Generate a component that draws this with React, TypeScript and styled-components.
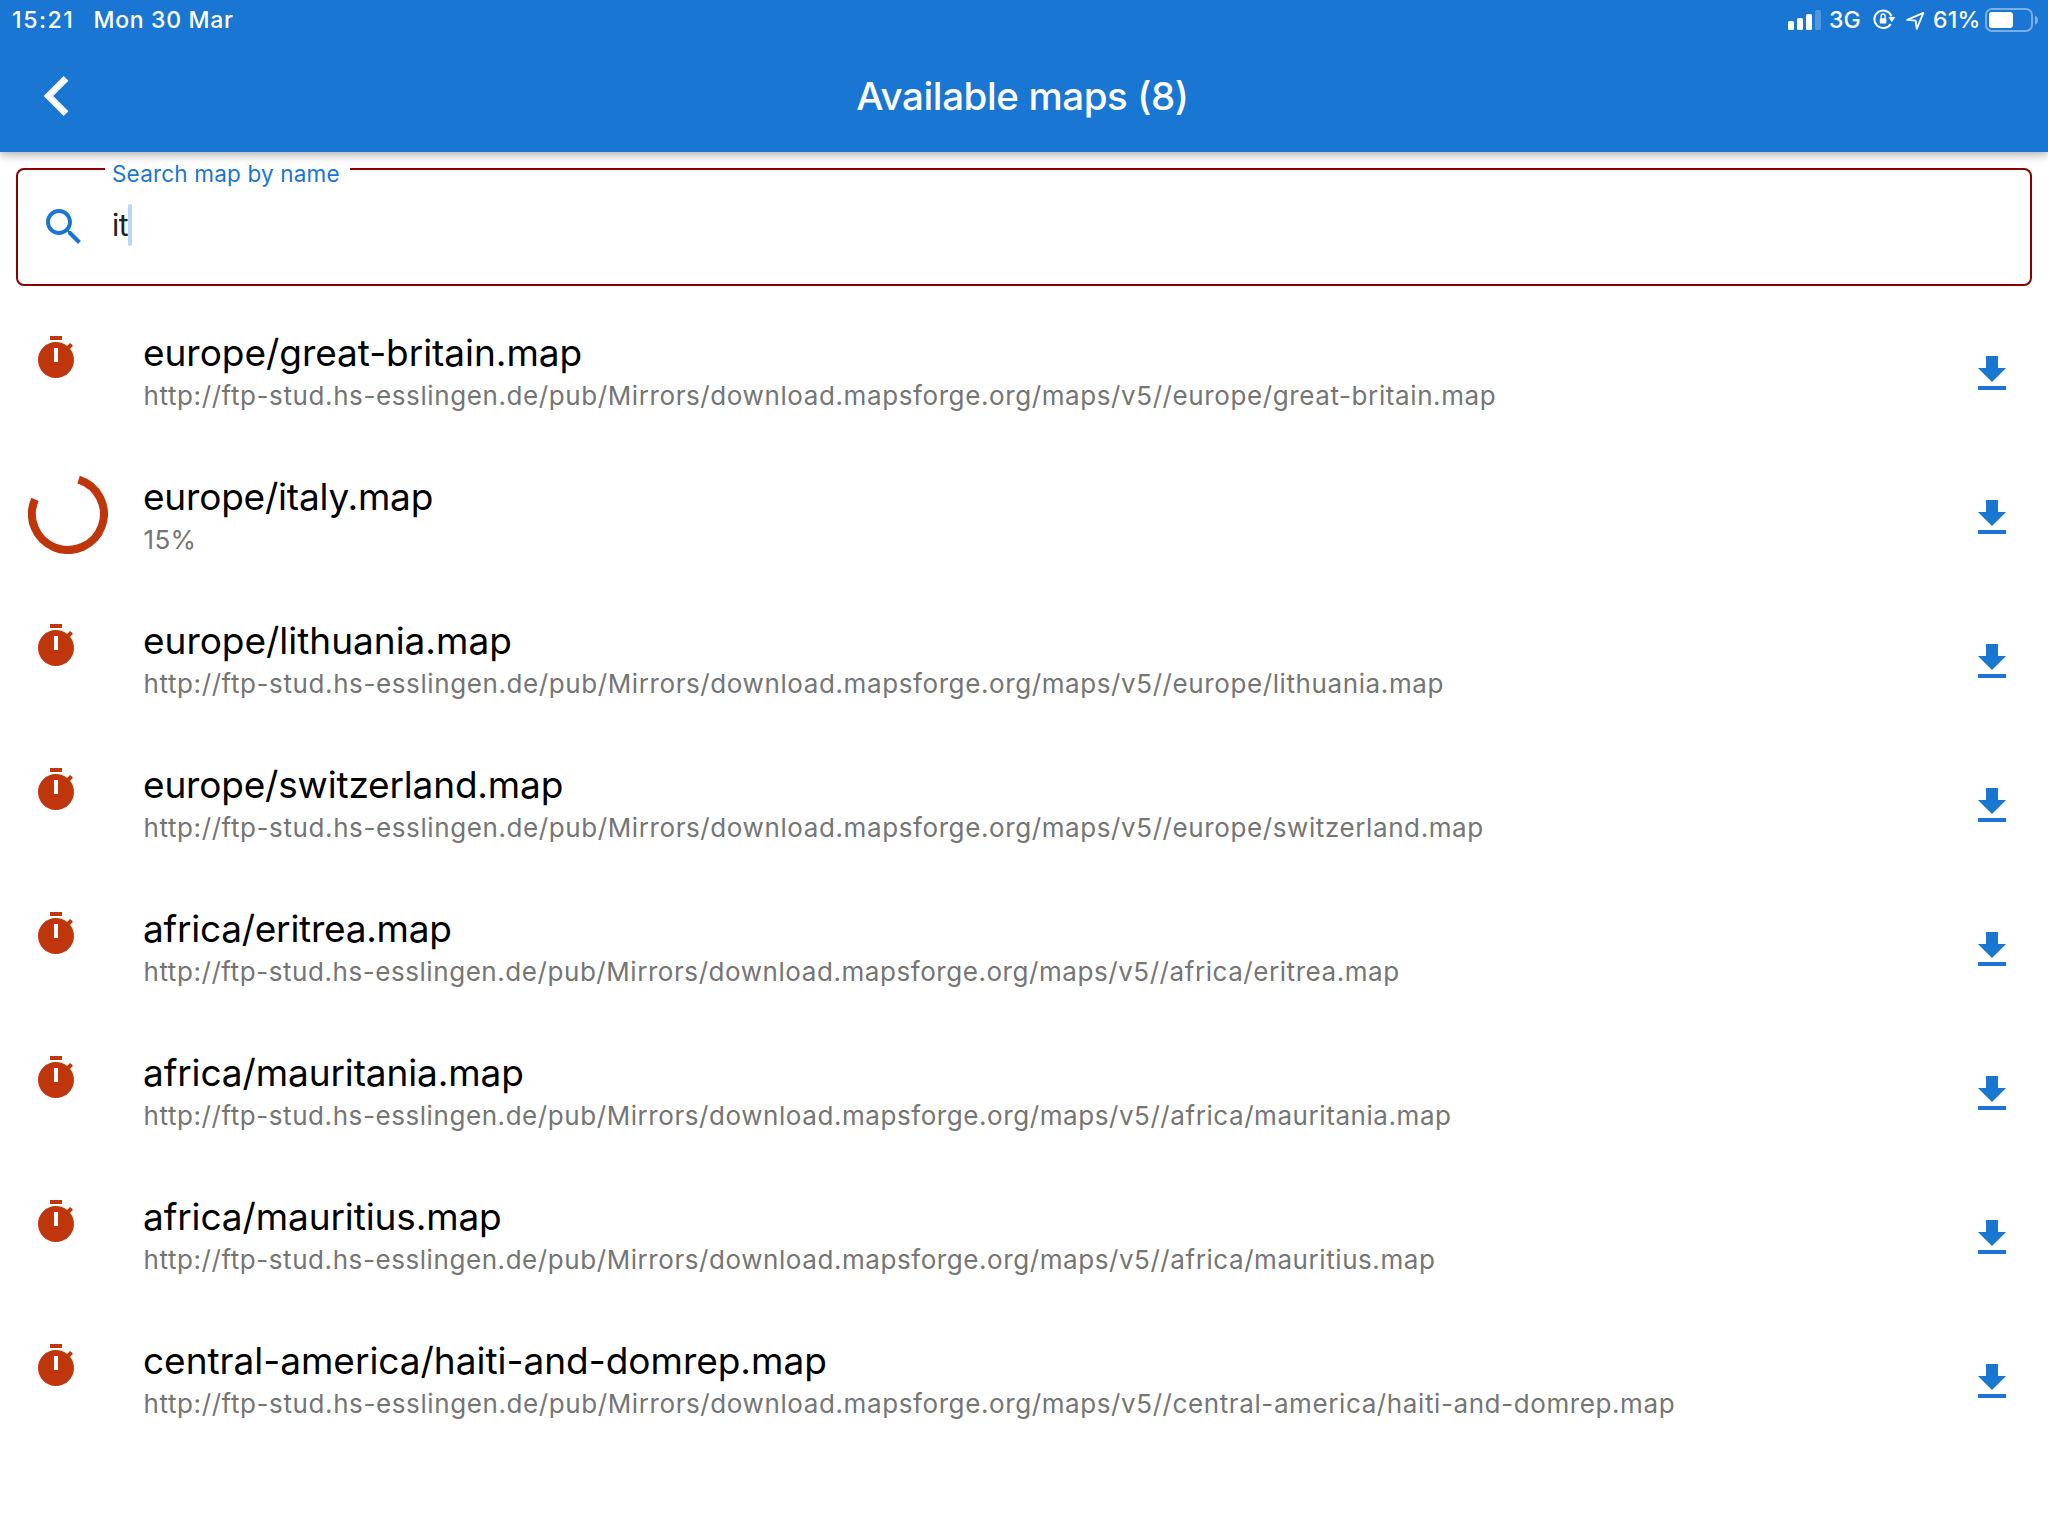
import React from 'react';
import styled, { createGlobalStyle } from 'styled-components';

const BLUE = '#1976d2';
const RUST = '#bf360c';
const MIRROR = 'http://ftp-stud.hs-esslingen.de/pub/Mirrors/download.mapsforge.org/maps/v5//';

const GlobalStyle = createGlobalStyle`
  *, *::before, *::after { box-sizing: border-box; }
  body {
    margin: 0;
    background: #fff;
    font-family: Inter, "Liberation Sans", sans-serif;
  }
  svg { display: block; flex: none; }
`;

const Screen = styled.div`
  display: flex;
  flex-direction: column;
  width: 100%;
  height: 1536px;
  overflow: hidden;
`;

const AppBar = styled.header`
  position: relative;
  z-index: 1;
  flex: none;
  height: 152px;
  background: ${BLUE};
  color: #fff;
  box-shadow: 0 2px 8px rgba(0, 0, 0, 0.2), 0 4px 10px rgba(0, 0, 0, 0.14);
`;

const StatusBar = styled.div`
  display: flex;
  align-items: center;
  height: 40px;
  padding: 0 10px 0 12px;
`;

const StatusText = styled.span<{ $spacing?: number }>`
  font-size: 23px;
  line-height: 28px;
  font-weight: 450;
  letter-spacing: ${(p) => p.$spacing ?? 0}px;
  white-space: pre;
`;

const StatusDate = styled(StatusText)`
  margin-left: 19px;
`;

const StatusIcons = styled.div`
  display: flex;
  align-items: center;
  margin-left: auto;
`;

const Network = styled(StatusText)`
  width: 34px;
  margin: 0 10px 0 8px;
`;

const Percent = styled(StatusText)`
  width: 52px;
  margin-left: -1px;
`;

const Toolbar = styled.div`
  display: grid;
  grid-template-columns: 120px 1fr 120px;
  align-items: center;
  height: 112px;
`;

const BackButton = styled.button`
  display: flex;
  width: 80px;
  height: 80px;
  margin-left: 17px;
  padding: 0;
  border: 0;
  background: none;
  color: inherit;
`;

const Title = styled.h1`
  margin: 0;
  padding-right: 3px;
  text-align: center;
  font-size: 38.5px;
  line-height: 48px;
  font-weight: 500;
  letter-spacing: -0.4px;
`;

const SearchField = styled.div`
  position: relative;
  flex: none;
  display: flex;
  align-items: center;
  height: 118px;
  margin: 16px;
  padding-left: 22px;
  border: 2px solid #8b0000;
  border-radius: 8px;
`;

const SearchLabel = styled.label`
  position: absolute;
  left: 87px;
  top: -10px;
  width: 245px;
  padding-left: 7px;
  font-size: 22.5px;
  line-height: 28px;
  letter-spacing: 0.18px;
  color: ${BLUE};
  white-space: nowrap;
  background: linear-gradient(#fff, #fff) 0 8px / 100% 2px no-repeat;
`;

const Query = styled.span`
  margin: 0 0 4px 24px;
  font-size: 30px;
  line-height: 42px;
  letter-spacing: -0.4px;
  color: #212121;
`;

const Caret = styled.span`
  width: 4px;
  height: 42px;
  margin-bottom: 4px;
  border-radius: 2px;
  background: #bad6f2;
`;

const List = styled.ul`
  flex: 1;
  margin: 0;
  padding: 0;
  list-style: none;
`;

const Row = styled.li`
  display: grid;
  grid-template-columns: 143px 1fr 80px;
  height: 144px;
`;

const Leading = styled.div<{ $busy: boolean }>`
  padding: ${(p) => (p.$busy ? '28px 0 0 28px' : '32px 0 0 32px')};
`;

const Texts = styled.div`
  padding-top: 29px;
  white-space: nowrap;
`;

const Name = styled.div<{ $tight: number }>`
  font-size: 37px;
  line-height: 44px;
  letter-spacing: ${(p) => p.$tight}px;
  color: #000;
`;

const Detail = styled.div<{ $spacing: number }>`
  margin-top: 3px;
  padding-left: 0.5px;
  font-size: 26px;
  line-height: 36px;
  letter-spacing: ${(p) => p.$spacing}px;
  color: #757575;
`;

const Download = styled.button`
  align-self: center;
  width: 48px;
  height: 48px;
  padding: 0;
  border: 0;
  background: none;
  color: ${BLUE};
`;

type IconProps = { size: number; d: string; color?: string };
const Icon = ({ size, d, color = 'currentColor' }: IconProps) => (
  <svg width={size} height={size} viewBox="0 0 24 24" fill={color} fillRule="evenodd">
    <path d={d} />
  </svg>
);

const CHEVRON = 'M15.41 7.41 14 6l-6 6 6 6 1.41-1.41L10.83 12z';
const SEARCH =
  'M15.5 14h-.79l-.28-.27C15.41 12.59 16 11.11 16 9.5 16 5.91 13.09 3 9.5 3S3 5.91 3 9.5 5.91 16 9.5 16c1.61 0 3.09-.59 4.23-1.57l.27.28v.79l5 4.99L20.49 19l-4.99-5zm-6 0C7.01 14 5 11.99 5 9.5S7.01 5 9.5 5 14 7.01 14 9.5 11.99 14 9.5 14z';
const TIMER =
  'M15 1H9v2h6V1zm-4 13h2V7h-2v7zm8.03-6.61 1.42-1.42c-.43-.51-.9-.99-1.41-1.41l-1.42 1.42C16.07 4.74 14.12 4 12 4c-4.97 0-9 4.03-9 9s4.02 9 9 9 9-4.03 9-9c0-2.12-.74-4.07-1.97-5.61z';
const FILE_DOWNLOAD = 'M19 9h-4V3H9v6H5l7 7 7-7zM5 18v2h14v-2H5z';

const Signal = () => (
  <svg width="33" height="40" viewBox="0 0 33 40" fill="#fff">
    <rect x="0" y="21" width="6" height="9" rx="1.6" />
    <rect x="9" y="18" width="6" height="12" rx="1.6" />
    <rect x="18" y="14" width="6" height="16" rx="1.6" />
    <rect x="27" y="10" width="6" height="20" rx="1.6" opacity=".24" />
  </svg>
);

const RotationLock = () => (
  <svg width="33" height="40" viewBox="0 0 33 40" fill="none" stroke="#fff">
    <path d="M17.7 23.9A8.8 8.8 0 1 1 18.5 16.4" strokeWidth="2" />
    <path d="M15.5 17.1h6.8l-3.5 5.2z" fill="#fff" stroke="none" />
    <rect x="6.8" y="18.2" width="6.6" height="5.4" rx=".8" fill="#fff" stroke="none" />
    <path d="M8.1 18.6v-2.2a2 2.4 0 0 1 4 0v2.2" strokeWidth="1.3" />
  </svg>
);

const Location = () => (
  <svg width="28" height="40" viewBox="0 0 28 40" fill="none" stroke="#fff" strokeWidth="1.8" strokeLinejoin="round">
    <path d="M17.4 12.9 1.2 19.8l8.5.8 1 8.3z" />
  </svg>
);

const Battery = () => (
  <svg width="53" height="40" viewBox="0 0 53 40" fill="#fff">
    <rect x="1" y="9" width="46" height="22" rx="6" fill="none" stroke="#fff" strokeOpacity=".42" strokeWidth="2" />
    <rect x="4" y="12" width="24" height="16" rx="3" />
    <path d="M50 15.8q3 1.4 3 4.4t-3 4.6z" opacity=".45" />
  </svg>
);

const Spinner = () => (
  <svg width="80" height="80" viewBox="0 0 80 80" fill="none" stroke={RUST} strokeWidth="8">
    <path d="M50.6 5.6A36 36 0 1 1 7 25.4" />
  </svg>
);

type MapItem = { name: string; tight: number; spacing?: number; progress?: string };
const maps: MapItem[] = [
  { name: 'europe/great-britain.map', tight: -0.04 },
  { name: 'europe/italy.map', tight: -0.2, progress: '15%', spacing: 0.3 },
  { name: 'europe/lithuania.map', tight: -0.02 },
  { name: 'europe/switzerland.map', tight: -0.18 },
  { name: 'africa/eritrea.map', tight: -0.25, spacing: 0.56 },
  { name: 'africa/mauritania.map', tight: -0.12, spacing: 0.57 },
  { name: 'africa/mauritius.map', tight: -0.12, spacing: 0.57 },
  { name: 'central-america/haiti-and-domrep.map', tight: -0.02 },
];

export default function App() {
  return (
    <Screen>
      <GlobalStyle />
      <AppBar>
        <StatusBar>
          <StatusText $spacing={1.6}>15:21</StatusText>
          <StatusDate $spacing={0.7}>Mon 30 Mar</StatusDate>
          <StatusIcons>
            <Signal />
            <Network>3G</Network>
            <RotationLock />
            <Location />
            <Percent $spacing={0.2}>61%</Percent>
            <Battery />
          </StatusIcons>
        </StatusBar>
        <Toolbar>
          <BackButton aria-label="Back">
            <Icon size={80} d={CHEVRON} />
          </BackButton>
          <Title>Available maps (8)</Title>
        </Toolbar>
      </AppBar>
      <SearchField>
        <SearchLabel>Search map by name</SearchLabel>
        <Icon size={48} d={SEARCH} color={BLUE} />
        <Query>it</Query>
        <Caret />
      </SearchField>
      <List>
        {maps.map((m) => (
          <Row key={m.name}>
            <Leading $busy={!!m.progress}>
              {m.progress ? <Spinner /> : <Icon size={48} d={TIMER} color={RUST} />}
            </Leading>
            <Texts>
              <Name $tight={m.tight}>{m.name}</Name>
              <Detail $spacing={m.spacing ?? 0.6}>{m.progress ?? MIRROR + m.name}</Detail>
            </Texts>
            <Download aria-label="Download">
              <Icon size={48} d={FILE_DOWNLOAD} />
            </Download>
          </Row>
        ))}
      </List>
    </Screen>
  );
}
